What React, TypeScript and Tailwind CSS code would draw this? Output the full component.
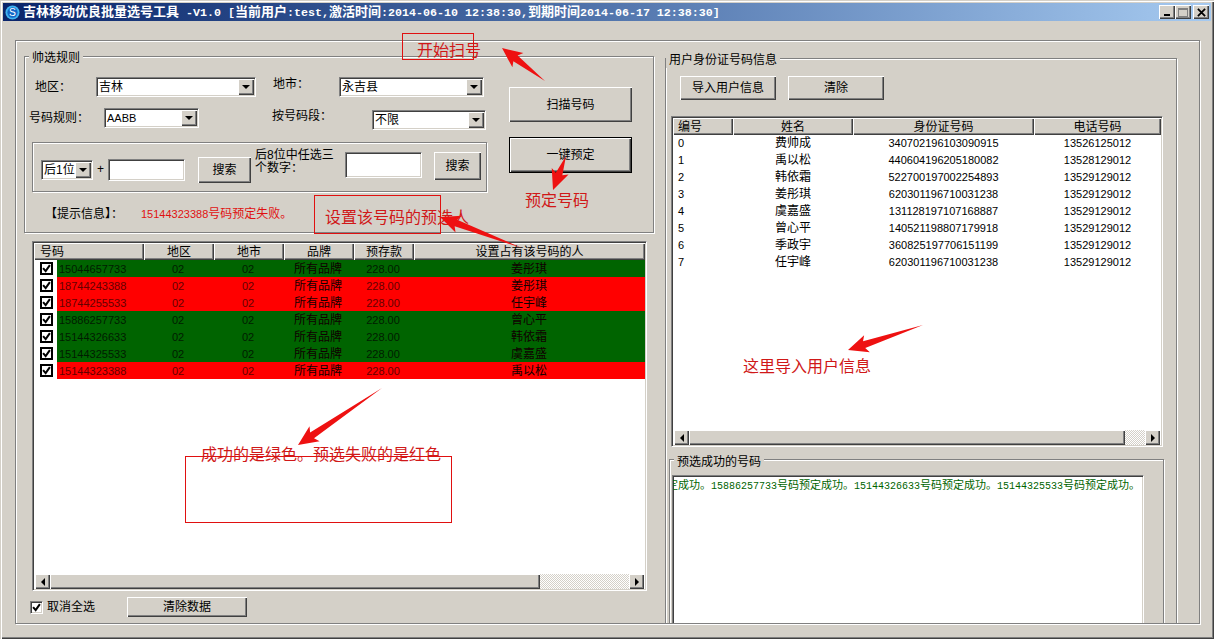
const raised = 'bg-[#d4d0c8] shadow-[inset_1px_1px_0_#ffffff,inset_-1px_-1px_0_#404040,inset_-2px_-2px_0_#808080]'
const sunken = 'bg-white border border-t-[#808080] border-l-[#808080] border-r-white border-b-white shadow-[inset_1px_1px_0_#404040,inset_-1px_-1px_0_#d4d0c8]'
const etched = 'border border-[#808080] shadow-[inset_1px_1px_0_#ffffff,1px_1px_0_#ffffff]'
const ditherTrack = 'bg-[repeating-conic-gradient(#ffffff_0_25%,#d4d0c8_0_50%)] bg-[length:2px_2px]'
const annotation = 'absolute whitespace-nowrap text-[16px] leading-[20px] text-[#d01818]'

const phoneRows = [
  { num: '15044657733', name: '姜彤琪', ok: true },
  { num: '18744243388', name: '姜彤琪', ok: false },
  { num: '18744255533', name: '任宇峰', ok: false },
  { num: '15886257733', name: '曾心平', ok: true },
  { num: '15144326633', name: '韩依霜', ok: true },
  { num: '15144325533', name: '虞嘉盛', ok: true },
  { num: '15144323388', name: '禹以松', ok: false },
]

const users = [
  ['0', '费帅成', '340702196103090915', '13526125012'],
  ['1', '禹以松', '440604196205180082', '13528129012'],
  ['2', '韩依霜', '522700197002254893', '13529129012'],
  ['3', '姜彤琪', '620301196710031238', '13529129012'],
  ['4', '虞嘉盛', '131128197107168887', '13529129012'],
  ['5', '曾心平', '140521198807179918', '13529129012'],
  ['6', '季政宇', '360825197706151199', '13529129012'],
  ['7', '任宇峰', '620301196710031238', '13529129012'],
]

// splits ascii runs out so they can use a narrower face next to the CJK text
function Mixed({ text, latin }: { text: string; latin: string }) {
  const parts = text.match(/[\x00-\x7f]+|[^\x00-\x7f]+/g) || []
  return (
    <>
      {parts.map((p, i) =>
        /^[\x00-\x7f]/.test(p) ? (
          <span key={i} className={latin}>{p}</span>
        ) : (
          <span key={i}>{p}</span>
        )
      )}
    </>
  )
}

function Triangle({ dir }: { dir: 'down' | 'left' | 'right' }) {
  if (dir === 'down') {
    return <div className="w-0 h-0 border-x-[4px] border-x-transparent border-t-[4px] border-t-black" />
  }
  if (dir === 'left') {
    return <div className="w-0 h-0 border-y-[4px] border-y-transparent border-r-[4px] border-r-black" />
  }
  return <div className="w-0 h-0 border-y-[4px] border-y-transparent border-l-[4px] border-l-black" />
}

function Combo({ value, className, small }: { value: string; className: string; small?: boolean }) {
  return (
    <div className={`${sunken} ${className} flex items-stretch h-[20px] p-[1px] shrink-0`}>
      <div className={`flex-1 min-w-0 pl-[1px] whitespace-nowrap overflow-hidden ${small ? 'text-[11px]' : 'text-[12px]'} leading-[16px]`}>
        {value}
      </div>
      <div className={`${raised} w-[16px] flex items-center justify-center`}>
        <Triangle dir="down" />
      </div>
    </div>
  )
}

function Button({ label, className }: { label: string; className: string }) {
  return (
    <div className={`${raised} ${className} flex items-center justify-center text-[12px] shrink-0`}>
      {label}
    </div>
  )
}

function HScroll({ thumb, track }: { thumb: string; track: string }) {
  return (
    <div className="flex h-[15px] mx-[1px] shrink-0">
      <div className={`${raised} w-[15px] flex items-center justify-center`}><Triangle dir="left" /></div>
      <div className={`${raised} ${thumb}`} />
      <div className={`${ditherTrack} ${track}`} />
      <div className={`${raised} w-[15px] flex items-center justify-center`}><Triangle dir="right" /></div>
    </div>
  )
}

function Check({ className }: { className: string }) {
  return (
    <svg viewBox="0 0 13 13" className={className}>
      <path d="M2.5 6 L5.5 9.5 L10.5 2.5" fill="none" stroke="#000" strokeWidth="2.4" />
    </svg>
  )
}

function HeaderCell({ label, className }: { label: string; className: string }) {
  return (
    <div className={`${raised} ${className} h-full text-[12px] leading-[18px] overflow-hidden whitespace-nowrap shrink-0`}>
      {label}
    </div>
  )
}

function Arrow({ from, to }: { from: [number, number]; to: [number, number] }) {
  const dx = to[0] - from[0]
  const dy = to[1] - from[1]
  const len = Math.hypot(dx, dy)
  const ux = dx / len
  const uy = dy / len
  const at = (along: number, side: number) =>
    `${from[0] + ux * along - uy * side},${from[1] + uy * along + ux * side}`
  const neck = len - 17
  const pts = [at(0, 0), at(neck, 3.5), at(neck - 3, 9), at(len, 0), at(neck - 3, -9), at(neck, -3.5)]
  return <polygon points={pts.join(' ')} fill="#ee1111" />
}

export default function App() {
  return (
    <div className="relative w-[1214px] h-[639px] overflow-hidden bg-[#d4d0c8] text-black shadow-[inset_1px_1px_0_#d4d0c8,inset_2px_2px_0_#ffffff,inset_-1px_-1px_0_#404040,inset_-2px_-2px_0_#808080] font-['Liberation_Sans','Noto_Sans_CJK_SC',sans-serif]">
      {/* title bar */}
      <div className="flex items-center h-[18px] mx-[3px] mt-[3px] bg-linear-to-r from-[#0a246a] to-[#a6caf0]">
        <svg viewBox="0 0 16 16" className="w-[15px] h-[15px] ml-[2px] shrink-0">
          <circle cx="8" cy="8" r="7.5" fill="#41b4f0" />
          <circle cx="8" cy="8" r="5.5" fill="#1468c8" />
          <text x="8" y="12" textAnchor="middle" fontSize="11" fill="#ffffff">S</text>
        </svg>
        <div className="ml-[3px] text-[13px] font-bold text-white whitespace-nowrap leading-[18px]">
          <Mixed
            text="吉林移动优良批量选号工具 -V1.0 [当前用户:test,激活时间:2014-06-10 12:38:30,到期时间2014-06-17 12:38:30]"
            latin="font-['Liberation_Mono'] text-[11.67px]"
          />
        </div>
        <div className="ml-auto mr-[2px] flex items-center">
          <div className={`${raised} w-[16px] h-[14px] flex items-end justify-center pb-[3px]`}>
            <div className="w-[6px] h-[2px] bg-black" />
          </div>
          <div className={`${raised} w-[16px] h-[14px] flex items-center justify-center`}>
            <div className="w-[10px] h-[9px] border border-[#808080] border-t-2" />
          </div>
          <div className={`${raised} w-[16px] h-[14px] ml-[2px] flex items-center justify-center`}>
            <svg viewBox="0 0 10 10" className="w-[9px] h-[9px]">
              <path d="M1 1 L9 9 M9 1 L1 9" stroke="#000" strokeWidth="2" />
            </svg>
          </div>
        </div>
      </div>

      {/* main panel */}
      <div className={`${etched} ml-[15px] mt-[19px] w-[1185px] h-[584px] overflow-hidden flex pl-[8px] pt-[15px]`}>
        {/* left column */}
        <div className="w-[630px] shrink-0">
          <div className={`${etched} relative h-[177px] flex`}>
            <span className="absolute -top-[7px] left-[4px] px-[3px] bg-[#d4d0c8] text-[12px] leading-[16px]">帅选规则</span>
            <div className="w-[484px] shrink-0">
              <div className="flex h-[20px] mt-[20px] text-[12px] leading-[20px]">
                <span className="ml-[10px] w-[61px]">地区：</span>
                <Combo value="吉林" className="w-[160px]" />
                <span className="ml-[17px] w-[66px] -mt-[3px]">地市：</span>
                <Combo value="永吉县" className="w-[145px]" />
              </div>
              <div className="flex h-[22px] mt-[11px] text-[12px] leading-[20px]">
                <span className="ml-[4px] w-[75px]">号码规则：</span>
                <Combo value="AABB" small className="w-[95px]" />
                <span className="ml-[73px] w-[100px] -mt-[2px]">按号码段：</span>
                <Combo value="不限" className="w-[114px] mt-[2px]" />
              </div>
              <div className={`${etched} ml-[7px] mt-[12px] w-[455px] h-[50px] flex items-start`}>
                <Combo value="后1位" className="w-[52px] ml-[8px] mt-[17px]" />
                <span className="w-[15px] mt-[18px] text-center text-[12px] leading-[16px]">+</span>
                <div className={`${sunken} w-[77px] h-[22px] mt-[16px] shrink-0`} />
                <Button label="搜索" className="w-[53px] h-[26px] ml-[13px] mt-[14px]" />
                <div className="w-[90px] ml-[4px] mt-[6px] text-[12px] leading-[13px]">后8位中任选三<br />个数字：</div>
                <div className={`${sunken} w-[77px] h-[26px] mt-[9px] shrink-0`} />
                <Button label="搜索" className="w-[47px] h-[28px] ml-[12px] mt-[9px]" />
              </div>
              <div className="flex h-[14px] mt-[15px] ml-[20px] items-center whitespace-nowrap">
                <span className="w-[96px] text-[12px]">【提示信息】：</span>
                <span className="text-[12px] text-[#e01010]">
                  <Mixed text="15144323388号码预定失败。" latin="text-[11px]" />
                </span>
              </div>
            </div>
            <div className="w-[123px] shrink-0 pt-[30px]">
              <Button label="扫描号码" className="w-[123px] h-[35px]" />
              <div className="w-[123px] h-[36px] mt-[15px] border border-black">
                <Button label="一键预定" className="w-full h-full" />
              </div>
            </div>
          </div>

          {/* phone number table */}
          <div className={`${sunken} ml-[8px] mt-[8px] w-[615px] h-[350px] flex flex-col p-[1px]`}>
            <div className="flex h-[17px] shrink-0">
              <HeaderCell label="号码" className="w-[110px] pl-[6px]" />
              <HeaderCell label="地区" className="w-[70px] text-center" />
              <HeaderCell label="地市" className="w-[70px] text-center" />
              <HeaderCell label="品牌" className="w-[70px] text-center" />
              <HeaderCell label="预存款" className="w-[60px] text-center" />
              <HeaderCell label="设置占有该号码的人" className="flex-1 min-w-0 text-center" />
            </div>
            {phoneRows.map(row => (
              <div key={row.num} className="flex h-[17px] shrink-0 items-stretch">
                <div className="w-[23px] flex items-center justify-end pr-[4px] shrink-0">
                  <div className="w-[13px] h-[13px] border-2 border-black bg-white flex items-center justify-center">
                    <Check className="w-[11px] h-[11px] shrink-0" />
                  </div>
                </div>
                <div className={`flex flex-1 min-w-0 leading-[18px] ${row.ok ? 'bg-[#006400] text-[#001c00]' : 'bg-[#ff0000] text-[#640000]'}`}>
                  <div className="w-[86px] pl-[2px] text-[11px] shrink-0">{row.num}</div>
                  <div className="w-[70px] text-center text-[11px] shrink-0">02</div>
                  <div className="w-[70px] text-center text-[11px] shrink-0">02</div>
                  <div className="w-[70px] text-center text-[12px] text-[#100000] shrink-0">所有品牌</div>
                  <div className="w-[60px] text-center text-[11px] shrink-0">228.00</div>
                  <div className="flex-1 text-center text-[12px] text-[#100000]">{row.name}</div>
                </div>
              </div>
            ))}
            <div className="flex-1" />
            <HScroll thumb="w-[490px]" track="w-[89px]" />
          </div>

          <div className="flex items-center mt-[6px] ml-[6px] h-[20px]">
            <div className={`${sunken} w-[13px] h-[13px] flex items-center justify-center shrink-0`}>
              <Check className="w-[11px] h-[11px] shrink-0" />
            </div>
            <span className="ml-[4px] w-[80px] text-[12px]">取消全选</span>
            <Button label="清除数据" className="w-[120px] h-[20px]" />
          </div>
        </div>

        {/* right column */}
        <div className={`${etched} relative ml-[11px] mt-[2px] w-[512px] h-[700px] shrink-0`}>
          <span className="absolute -top-[7px] left-0 px-[3px] bg-[#d4d0c8] text-[12px] leading-[16px]">用户身份证号码信息</span>
          <div className="flex mt-[17px] ml-[14px] gap-[12px]">
            <Button label="导入用户信息" className="w-[96px] h-[24px]" />
            <Button label="清除" className="w-[96px] h-[24px]" />
          </div>
          <div className={`${sunken} ml-[5px] mt-[16px] w-[492px] h-[331px] flex flex-col p-[1px]`}>
            <div className="flex h-[17px] shrink-0">
              <HeaderCell label="编号" className="w-[60px] pl-[5px]" />
              <HeaderCell label="姓名" className="w-[120px] text-center" />
              <HeaderCell label="身份证号码" className="w-[181px] text-center" />
              <HeaderCell label="电话号码" className="flex-1 min-w-0 text-center" />
            </div>
            {users.map(u => (
              <div key={u[0]} className="flex h-[17px] shrink-0 leading-[17px]">
                <div className="w-[60px] pl-[5px] text-[11px] shrink-0">{u[0]}</div>
                <div className="w-[120px] text-center text-[12px] shrink-0">{u[1]}</div>
                <div className="w-[181px] text-center text-[11px] shrink-0">{u[2]}</div>
                <div className="flex-1 text-center text-[11px]">{u[3]}</div>
              </div>
            ))}
            <div className="flex-1" />
            <HScroll thumb="w-[436px]" track="w-[20px]" />
          </div>

          <div className={`${etched} relative ml-[3px] mt-[12px] w-[495px] h-[400px]`}>
            <span className="absolute -top-[6px] left-[4px] px-[3px] bg-[#d4d0c8] text-[12px] leading-[16px]">预选成功的号码</span>
            <div className={`${sunken} ml-[2px] mt-[15px] w-[472px] h-[300px] overflow-hidden flex justify-end pr-[3px] pt-[1px]`}>
              <div className="shrink-0 whitespace-nowrap text-[11px] leading-[16px] text-[#006400]">
                <Mixed
                  text="定成功。15886257733号码预定成功。15144326633号码预定成功。15144325533号码预定成功。"
                  latin="font-['Liberation_Mono'] text-[10px]"
                />
              </div>
            </div>
          </div>
        </div>
      </div>

      {/* red annotations drawn over the screenshot */}
      <div className="absolute left-[402px] top-[33px] w-[72px] h-[27px] border border-[#e01010]" />
      <div className="absolute left-[314px] top-[195px] w-[127px] h-[39px] border border-[#e01010]" />
      <div className="absolute left-[185px] top-[456px] w-[267px] h-[67px] border border-[#e01010]" />
      <span className={`${annotation} left-[417px] top-[41px]`}>开始扫号</span>
      <span className={`${annotation} left-[525px] top-[191px]`}>预定号码</span>
      <span className={`${annotation} left-[325px] top-[208px]`}>设置该号码的预选人</span>
      <span className={`${annotation} left-[743px] top-[357px]`}>这里导入用户信息</span>
      <span className={`${annotation} left-[201px] top-[445px]`}>成功的是绿色。预选失败的是红色</span>
      <svg className="absolute left-0 top-0 w-[1214px] h-[639px] pointer-events-none">
        <Arrow from={[545, 81]} to={[502, 48]} />
        <Arrow from={[566, 156]} to={[553, 190]} />
        <Arrow from={[522, 248]} to={[440, 217]} />
        <Arrow from={[923, 325]} to={[848, 350]} />
        <Arrow from={[382, 388]} to={[298, 445]} />
      </svg>
    </div>
  )
}
